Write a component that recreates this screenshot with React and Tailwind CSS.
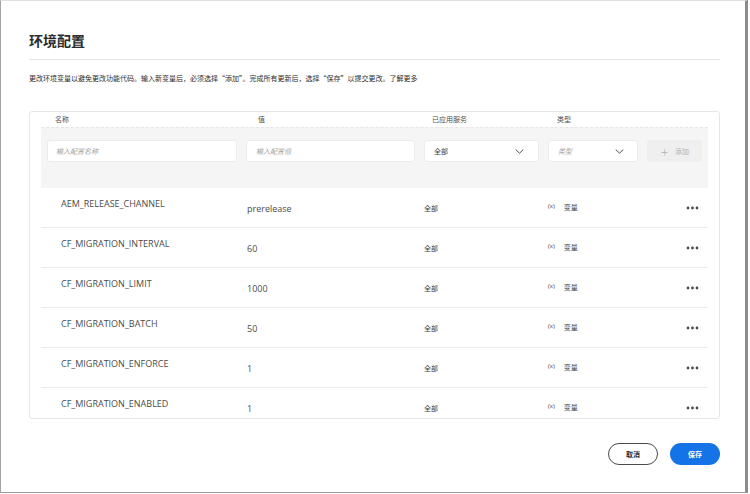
import React from 'react';

const rows = [
  { name: 'AEM_RELEASE_CHANNEL', value: 'prerelease' },
  { name: 'CF_MIGRATION_INTERVAL', value: '60' },
  { name: 'CF_MIGRATION_LIMIT', value: '1000' },
  { name: 'CF_MIGRATION_BATCH', value: '50' },
  { name: 'CF_MIGRATION_ENFORCE', value: '1' },
  { name: 'CF_MIGRATION_ENABLED', value: '1' },
];

const cjk = { fontFamily: '"Noto Sans CJK SC", "Noto Sans", sans-serif' };
const latin = { fontFamily: '"Open Sans", "Noto Sans CJK SC", sans-serif' };

function Chevron() {
  return (
    <svg width="9" height="5" viewBox="0 0 9 5" fill="none">
      <path d="M1 0.8l3.5 3.4 3.5-3.4" stroke="#4b4b4b" strokeWidth="1" strokeLinecap="round" strokeLinejoin="round" />
    </svg>
  );
}

function MoreDots() {
  return (
    <svg width="13" height="4" viewBox="0 0 13 4">
      <circle cx="2" cy="2" r="1.4" fill="#4b4b4b" />
      <circle cx="6.5" cy="2" r="1.4" fill="#4b4b4b" />
      <circle cx="11" cy="2" r="1.4" fill="#4b4b4b" />
    </svg>
  );
}

export default function App() {
  return (
    <div className="w-[750px] h-[494px] bg-white" style={cjk}>
      <div className="w-[748px] h-[493px] border-l border-t border-b border-r-[3px] border-l-[#a3a3a3] border-t-[#e0e0e0] border-b-[#9c9c9c] border-r-[#8c8c8c] bg-white pl-[28px] pr-[25px] pt-[29px] flex flex-col">
        {/* title */}
        <h1 className="text-[14px] leading-[20px] font-bold text-[#2c2c2c]">环境配置</h1>
        <div className="mt-[9px] h-px bg-[#e3e3e3]" />
        <p className="mt-[13px] text-[7px] leading-[10px] text-[#2c2c2c]">
          更改环境变量以避免更改功能代码。输入新变量后，必须选择“添加”。完成所有更新后，选择“保存”以提交更改。了解更多
        </p>

        {/* table */}
        <div className="mt-[28px] h-[308px] border border-[#e6e6e6] rounded-[3px] overflow-hidden px-[11px]">
          <div className="h-[15px] pl-[6px] grid grid-cols-[190px_169px_115px_90px_55px] gap-x-[9px] items-center text-[7px] text-[#505050]">
            <span className="pl-[8px]">名称</span>
            <span className="pl-[12px]">值</span>
            <span className="pl-[8px]">已应用服务</span>
            <span className="pl-[9px]">类型</span>
            <span />
          </div>

          {/* input row */}
          <div className="h-[61px] bg-[#f5f5f5] border-t border-dashed border-[#e6e6e6] pl-[6px] pt-[12px] grid grid-cols-[190px_169px_115px_90px_55px] gap-x-[9px] items-start">
            <div className="h-[22px] bg-white border border-[#ececec] rounded-[3px] flex items-center pl-[8px] text-[7px] italic text-[#a0a0a0]">输入配置名称</div>
            <div className="h-[22px] bg-white border border-[#ececec] rounded-[3px] flex items-center pl-[9px] text-[7px] italic text-[#a0a0a0]">输入配置值</div>
            <div className="h-[22px] bg-white border border-[#ececec] rounded-[3px] flex items-center justify-between pl-[9px] pr-[14px] text-[7px] text-[#3a3a3a]">
              <span>全部</span>
              <Chevron />
            </div>
            <div className="h-[22px] bg-white border border-[#ececec] rounded-[3px] flex items-center justify-between pl-[9px] pr-[13px] text-[7px] italic text-[#a0a0a0]">
              <span>类型</span>
              <Chevron />
            </div>
            <div className="h-[22px] bg-[#efefef] rounded-[3px] flex items-center pl-[14px] gap-[7px] text-[7px] text-[#b3b3b3]">
              <span className="text-[13px] leading-none font-light">+</span>
              <span>添加</span>
            </div>
          </div>

          {/* data rows */}
          {rows.map((r, i) => (
            <div key={i} className="h-[40px] border-b border-[#ececec] pl-[6px] grid grid-cols-[190px_169px_115px_90px_55px] gap-x-[9px] items-center">
              <span className="pl-[14px] -mt-[8px] text-[9px] text-[#4b4b4b]" style={latin}>{r.name}</span>
              <span className="pl-px mt-[2px] text-[9px] text-[#4b4b4b]" style={latin}>{r.value}</span>
              <span className="mt-[2px] text-[7px] text-[#3a3a3a]">全部</span>
              <span className="flex items-center gap-[9px] text-[7px] text-[#3a3a3a]">
                <span className="text-[6px] -mt-[3px]" style={latin}>(x)</span>
                <span>变量</span>
              </span>
              <span className="flex justify-end pr-[3px]"><MoreDots /></span>
            </div>
          ))}
        </div>

        {/* footer */}
        <div className="mt-[24px] flex justify-end gap-[12px]">
          <button className="w-[50px] h-[22px] rounded-full border-[1.5px] border-[#4b4b4b] text-[7px] text-[#2c2c2c] font-semibold">取消</button>
          <button className="w-[50px] h-[22px] rounded-full bg-[#1473e6] text-[7px] text-white font-bold">保存</button>
        </div>
      </div>
    </div>
  );
}
